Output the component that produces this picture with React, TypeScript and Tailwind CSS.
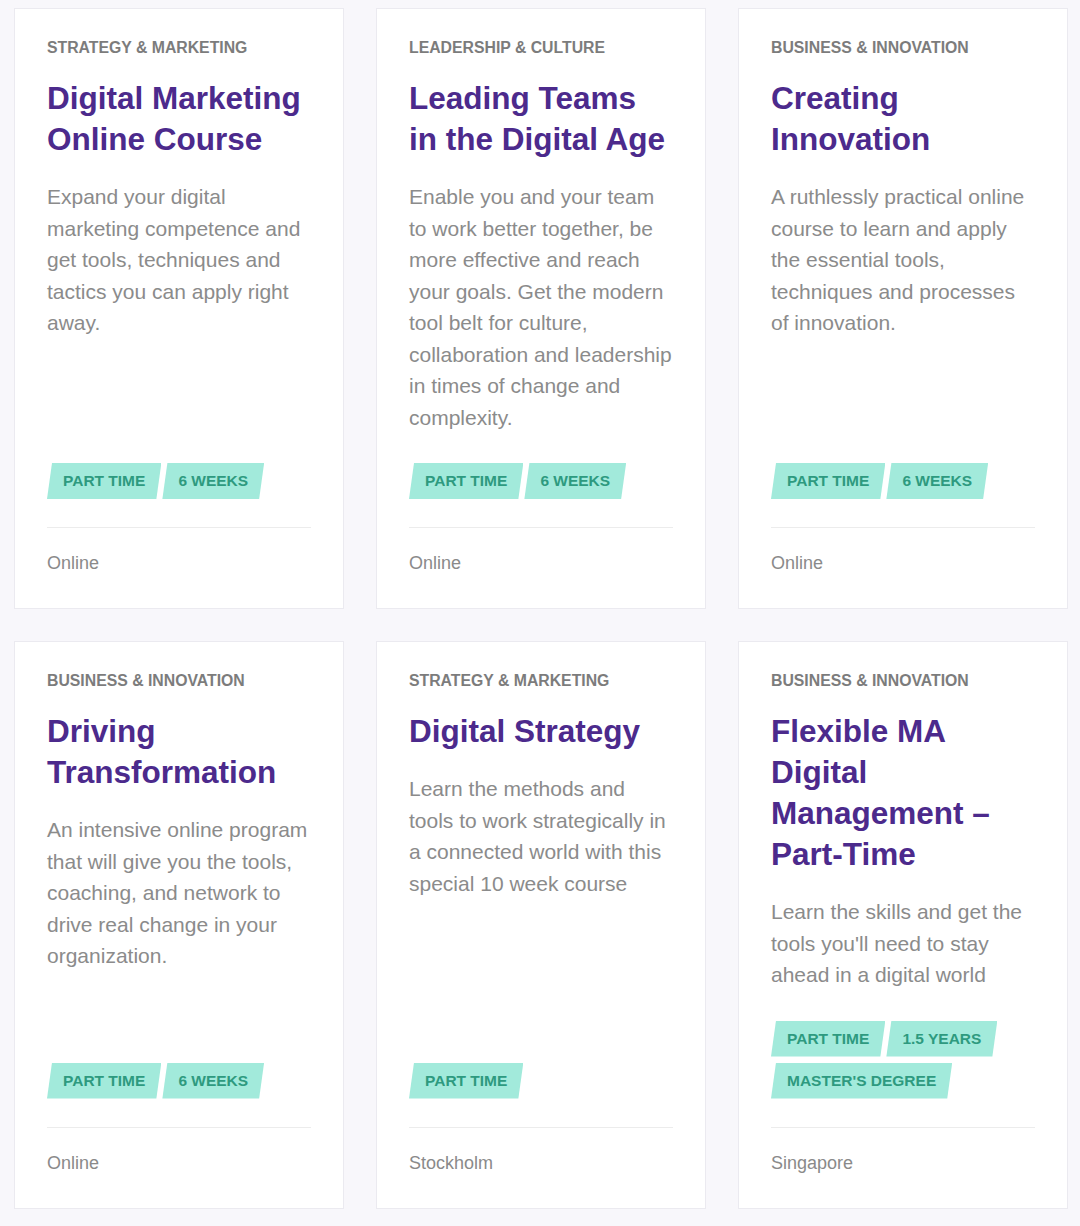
const courses = [
  {
    category: 'Strategy & Marketing',
    title: 'Digital Marketing Online Course',
    description:
      'Expand your digital marketing competence and get tools, techniques and tactics you can apply right away.',
    tags: ['Part time', '6 weeks'],
    location: 'Online',
  },
  {
    category: 'Leadership & Culture',
    title: 'Leading Teams in the Digital Age',
    description:
      'Enable you and your team to work better together, be more effective and reach your goals. Get the modern tool belt for culture, collaboration and leadership in times of change and complexity.',
    tags: ['Part time', '6 weeks'],
    location: 'Online',
  },
  {
    category: 'Business & Innovation',
    title: 'Creating Innovation',
    description:
      'A ruthlessly practical online course to learn and apply the essential tools, techniques and processes of innovation.',
    tags: ['Part time', '6 weeks'],
    location: 'Online',
  },
  {
    category: 'Business & Innovation',
    title: 'Driving Transformation',
    description:
      'An intensive online program that will give you the tools, coaching, and network to drive real change in your organization.',
    tags: ['Part time', '6 weeks'],
    location: 'Online',
  },
  {
    category: 'Strategy & Marketing',
    title: 'Digital Strategy',
    description:
      'Learn the methods and tools to work strategically in a connected world with this special 10 week course',
    tags: ['Part time'],
    location: 'Stockholm',
  },
  {
    category: 'Business & Innovation',
    title: 'Flexible MA Digital Management – Part-Time',
    description: "Learn the skills and get the tools you'll need to stay ahead in a digital world",
    tags: ['Part time', '1.5 years', "Master's degree"],
    location: 'Singapore',
  },
]

type Course = (typeof courses)[number]

function Tag({ label }: { label: string }) {
  return (
    <span className="flex h-9 items-center bg-[#a2eadb] px-4 text-[15.5px] font-bold uppercase text-[#2e9a7f] [clip-path:polygon(5px_0,100%_0,calc(100%-5px)_100%,0_100%)]">
      {label}
    </span>
  )
}

function CourseCard({ course }: { course: Course }) {
  return (
    <div className="flex flex-col border border-[#ebeaf0] bg-white pl-8 pr-8 pt-[29px] pb-[33px]">
      <p className="text-[15.8px] font-bold uppercase leading-5 text-[#7c7c7c]">{course.category}</p>
      <h2 className="mt-5 max-w-[258px] text-[31.5px] font-bold leading-[41px] text-[#4c2a8c]">
        {course.title}
      </h2>
      <p className="mt-[21px] text-[21px] leading-[31.5px] text-[#8b8b8b]">{course.description}</p>
      <div className="mt-auto flex flex-wrap gap-x-px gap-y-1.5 pt-[30px]">
        {course.tags.map((t) => (
          <Tag key={t} label={t} />
        ))}
      </div>
      <div className="mt-7 h-px bg-[#ececec]" />
      <p className="mt-[23px] text-lg leading-6 text-[#8a8a8a]">{course.location}</p>
    </div>
  )
}

export default function App() {
  return (
    <div className="min-h-screen bg-[#f8f7fb] pl-[14px] pt-2 pb-[18px] font-['Liberation_Sans',Arial,sans-serif]">
      <div className="grid grid-cols-[repeat(3,330px)] gap-x-8 gap-y-8">
        {courses.map((c) => (
          <CourseCard key={c.title} course={c} />
        ))}
      </div>
    </div>
  )
}
